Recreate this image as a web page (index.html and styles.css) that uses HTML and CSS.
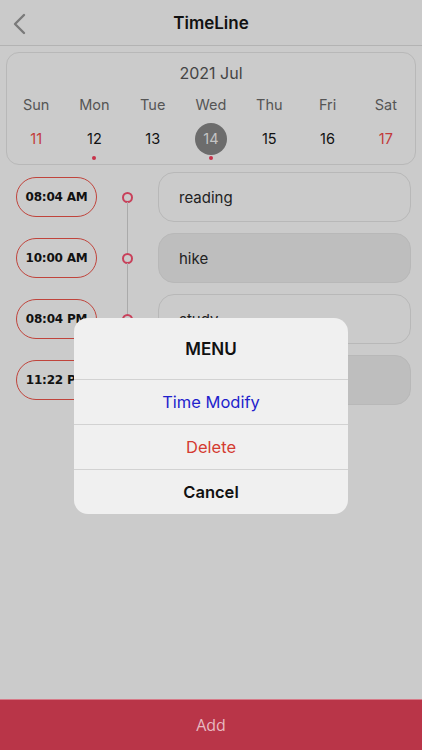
FILE: index.html
```html
<!DOCTYPE html>
<html lang="en">
<head>
<meta charset="utf-8">
<title>TimeLine</title>
<link rel="stylesheet" href="styles.css">
</head>
<body>
<div class="page">
  <header class="header">
    <svg class="back" width="14" height="22" viewBox="0 0 14 22"><path d="M12 2 L3 11 L12 20" fill="none" stroke="#7a7a7a" stroke-width="2.4" stroke-linecap="round" stroke-linejoin="round"/></svg>
    <h1 class="title">TimeLine</h1>
  </header>

  <section class="calendar">
    <div class="month">2021 Jul</div>
    <div class="weekdays">
      <span>Sun</span><span>Mon</span><span>Tue</span><span>Wed</span><span>Thu</span><span>Fri</span><span>Sat</span>
    </div>
    <div class="days">
      <div class="day"><span class="num red">11</span><span class="dot none"></span></div>
      <div class="day"><span class="num">12</span><span class="dot"></span></div>
      <div class="day"><span class="num">13</span><span class="dot none"></span></div>
      <div class="day"><span class="num selected">14</span><span class="dot"></span></div>
      <div class="day"><span class="num">15</span><span class="dot none"></span></div>
      <div class="day"><span class="num">16</span><span class="dot none"></span></div>
      <div class="day"><span class="num red">17</span><span class="dot none"></span></div>
    </div>
  </section>

  <main class="timeline">
    <div class="row">
      <div class="time">08:04 AM</div>
      <div class="mark line"><span class="ring"></span></div>
      <div class="event">reading</div>
    </div>
    <div class="row">
      <div class="time">10:00 AM</div>
      <div class="mark line"><span class="ring"></span></div>
      <div class="event dark">hike</div>
    </div>
    <div class="row">
      <div class="time">08:04 PM</div>
      <div class="mark line"><span class="ring"></span></div>
      <div class="event">study</div>
    </div>
    <div class="row">
      <div class="time">11:22 PM</div>
      <div class="mark"><span class="ring"></span></div>
      <div class="event dark">sleep</div>
    </div>
  </main>

  <footer class="add">Add</footer>

  <div class="menu">
    <div class="menu-title">MENU</div>
    <div class="menu-item blue">Time Modify</div>
    <div class="menu-item red-text">Delete</div>
    <div class="menu-item bold">Cancel</div>
  </div>
</div>
</body>
</html>
```

FILE: styles.css
```css
* { box-sizing: border-box; }
html, body { margin: 0; padding: 0; }
body {
  font-family: Inter, "Liberation Sans", sans-serif;
  background: #cbcbcb;
  color: #111;
}
.page {
  position: relative;
  width: 422px;
  height: 750px;
  display: flex;
  flex-direction: column;
  overflow: hidden;
  background: #cbcbcb;
}
.header {
  position: relative;
  height: 46px;
  flex: none;
  display: flex;
  align-items: center;
  justify-content: center;
  border-bottom: 1px solid #b3b3b3;
  background: #cacaca;
}
.back {
  position: absolute;
  left: 12px;
  top: 13px;
}
.title {
  margin: 0;
  font-size: 17px;
  font-weight: 600;
  color: #111;
}
.calendar {
  margin: 6px 6px 0;
  height: 113px;
  flex: none;
  border: 1px solid #b8b8b8;
  border-radius: 13px;
  padding-bottom: 4px;
}
.month {
  height: 40px;
  line-height: 40px;
  text-align: center;
  font-size: 16px;
  color: #444;
}
.weekdays, .days {
  display: grid;
  grid-template-columns: repeat(7, 1fr);
}
.weekdays span {
  line-height: 24px;
  text-align: center;
  font-size: 14.5px;
  color: #555;
}
.days { margin-top: 6px; }
.day {
  display: flex;
  flex-direction: column;
  align-items: center;
}
.num {
  width: 32px;
  height: 32px;
  line-height: 32px;
  text-align: center;
  font-size: 14.5px;
  color: #111;
  border-radius: 50%;
}
.num.red { color: #c23a3a; }
.num.selected { background: #6c6c6c; color: #c4c4c4; }
.dot {
  margin-top: 1px;
  width: 4px;
  height: 4px;
  border-radius: 50%;
  background: #c8324a;
}
.dot.none { background: transparent; }
.timeline {
  flex: 1;
  padding-top: 7px;
  display: flex;
  flex-direction: column;
  gap: 11px;
}
.row {
  height: 50px;
  display: flex;
  align-items: center;
}
.time {
  margin-left: 16px;
  width: 81px;
  height: 40px;
  border: 1.5px solid #c0443c;
  border-radius: 20px;
  display: flex;
  align-items: center;
  justify-content: center;
  font-family: "DejaVu Sans", sans-serif;
  font-weight: 700;
  font-size: 12px;
  letter-spacing: -0.2px;
  color: #111;
}
.mark {
  position: relative;
  width: 61px;
  height: 50px;
  display: flex;
  align-items: center;
  justify-content: center;
}
.mark.line::after {
  content: "";
  position: absolute;
  left: 30px;
  top: 30px;
  width: 1px;
  height: 51px;
  background: #aaaaaa;
}
.ring {
  width: 11px;
  height: 11px;
  border: 2px solid #c8405a;
  border-radius: 50%;
}
.event {
  width: 253px;
  height: 50px;
  border: 1px solid #b8b8b8;
  border-radius: 16px;
  padding-left: 20px;
  display: flex;
  align-items: center;
  font-size: 15px;
  color: #222;
}
.event.dark { background: #bebebe; }
.add {
  height: 51px;
  flex: none;
  background: #b93548;
  border-top: 1px solid #d77a88;
  display: flex;
  align-items: center;
  justify-content: center;
  font-family: "Open Sans", sans-serif;
  font-size: 16px;
  color: #e7b9c1;
}
.menu {
  position: absolute;
  left: 74px;
  top: 318px;
  width: 274px;
  background: #f0f0f0;
  border-radius: 14px;
  overflow: hidden;
}
.menu-title {
  height: 61px;
  display: flex;
  align-items: center;
  justify-content: center;
  font-size: 17px;
  font-weight: 600;
  color: #111;
}
.menu-item {
  height: 45px;
  border-top: 1px solid #d2d2d2;
  display: flex;
  align-items: center;
  justify-content: center;
  font-size: 16.5px;
}
.blue { color: #1f1fcc; }
.red-text { color: #d43b31; }
.bold { font-weight: 600; color: #111; }
```
